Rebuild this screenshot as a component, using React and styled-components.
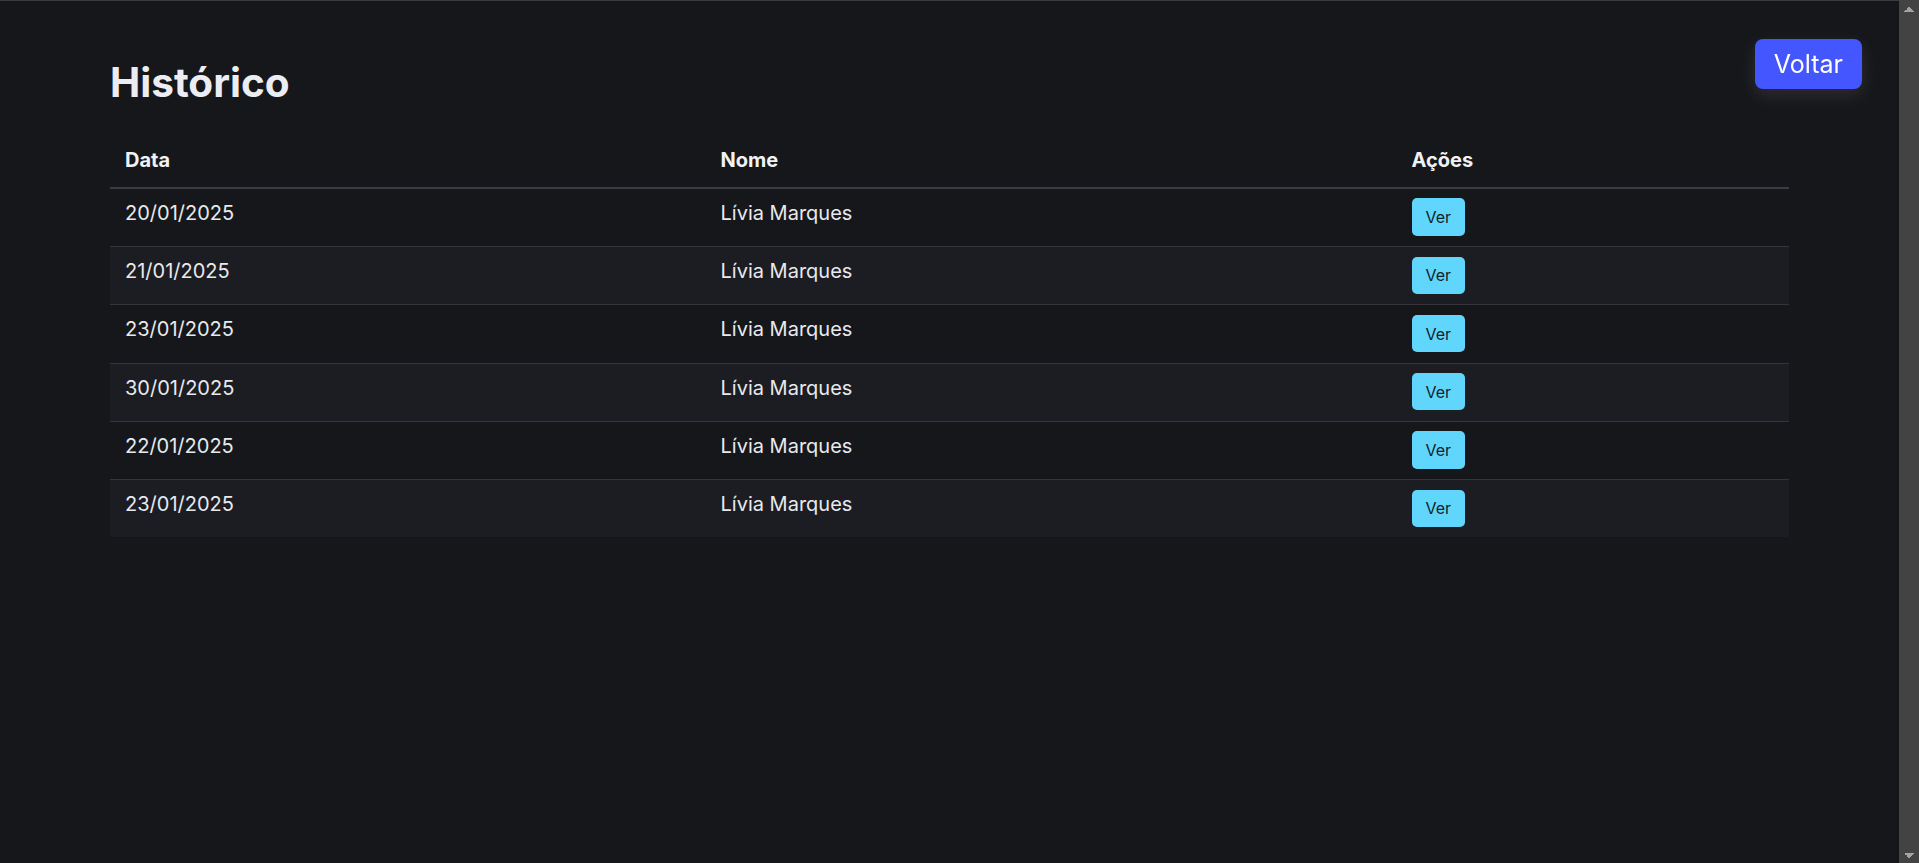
import styled, { createGlobalStyle } from "styled-components";

// the page in the reference shows an empty, always-on scrollbar track at the right
const GlobalStyle = createGlobalStyle`
  html {
    background-color: #16171b;
    background-image:
      linear-gradient(to bottom right, transparent 50%, #a3a3a3 50%),
      linear-gradient(to bottom left, transparent 50%, #a3a3a3 50%),
      linear-gradient(to top right, transparent 50%, #a3a3a3 50%),
      linear-gradient(to top left, transparent 50%, #a3a3a3 50%),
      linear-gradient(#434343, #434343);
    background-size: 5px 5px, 5px 5px, 5px 5px, 5px 5px, 20px 100%;
    background-position:
      right 10px top 7px,
      right 5px top 7px,
      right 10px bottom 5px,
      right 5px bottom 5px,
      right top;
    background-repeat: no-repeat;
    min-height: 100%;
  }
  body {
    margin: 0 20px 0 0;
    min-height: 100vh;
    box-sizing: border-box;
    border-top: 1px solid #3b3b3e;
    background: #16171b;
    color: #e6e7eb;
    font-family: Inter, "Noto Sans", sans-serif;
  }
`;

const historico = [
  { data: "20/01/2025", nome: "Lívia Marques" },
  { data: "21/01/2025", nome: "Lívia Marques" },
  { data: "23/01/2025", nome: "Lívia Marques" },
  { data: "30/01/2025", nome: "Lívia Marques" },
  { data: "22/01/2025", nome: "Lívia Marques" },
  { data: "23/01/2025", nome: "Lívia Marques" },
];

const Historico = () => {
  return (
    <>
      <GlobalStyle />
      <BackButton type="button">Voltar</BackButton>
      <Page>
        <Title>Histórico</Title>
        <Table>
          <colgroup>
            <col style={{ width: 595.5 }} />
            <col style={{ width: 691 }} />
            <col />
          </colgroup>
          <thead>
            <tr>
              <HeadCell>Data</HeadCell>
              <HeadCell>Nome</HeadCell>
              <HeadCell>Ações</HeadCell>
            </tr>
          </thead>
          <tbody>
            {historico.map((item, i) => (
              <Row key={i}>
                <Cell>{item.data}</Cell>
                <Cell>{item.nome}</Cell>
                <ActionCell>
                  <ViewButton type="button">Ver</ViewButton>
                </ActionCell>
              </Row>
            ))}
          </tbody>
        </Table>
      </Page>
    </>
  );
};

const Page = styled.main`
  padding: 58px 110px 0 110px;
`;

const Title = styled.h1`
  margin: 0 0 27px;
  font-size: 40.5px;
  line-height: 48px;
  font-weight: 700;
  color: #ecedf2;
`;

const Table = styled.table`
  width: 100%;
  table-layout: fixed;
  border-collapse: separate;
  border-spacing: 0;
  font-size: 20px;
  line-height: 24px;
`;

const HeadCell = styled.th`
  padding: 14px 15px 14.7px;
  text-align: left;
  font-weight: 700;
  color: #f1f2f5;
  border-bottom: 2px solid #3a3c44;
`;

const Row = styled.tr`
  &:nth-child(even) {
    background: #1b1d22;
  }
  &:last-child td {
    border-bottom: none;
  }
`;

const Cell = styled.td`
  padding: 12px 15px 21.3px;
  vertical-align: top;
  color: #e8e9ed;
  border-bottom: 1px solid #33353d;
`;

const ActionCell = styled(Cell)`
  padding: 9.6px 15px 10.4px;
`;

const ViewButton = styled.button`
  display: flex;
  align-items: center;
  justify-content: center;
  height: 37.3px;
  padding: 0 14px;
  border: none;
  border-radius: 5px;
  background: #61d6fc;
  color: #0f1f2e;
  font-family: Inter, "Noto Sans", sans-serif;
  font-size: 16px;
  cursor: pointer;
`;

const BackButton = styled.button`
  position: fixed;
  top: 39px;
  right: 57px;
  height: 50px;
  padding: 0 19px;
  border: none;
  border-radius: 8px;
  background: #4356ff;
  color: #ffffff;
  font-family: Inter, "Noto Sans", sans-serif;
  font-size: 25px;
  line-height: 50px;
  box-shadow: 0 6px 18px rgba(255, 255, 255, 0.1);
  cursor: pointer;
`;

export default Historico;
